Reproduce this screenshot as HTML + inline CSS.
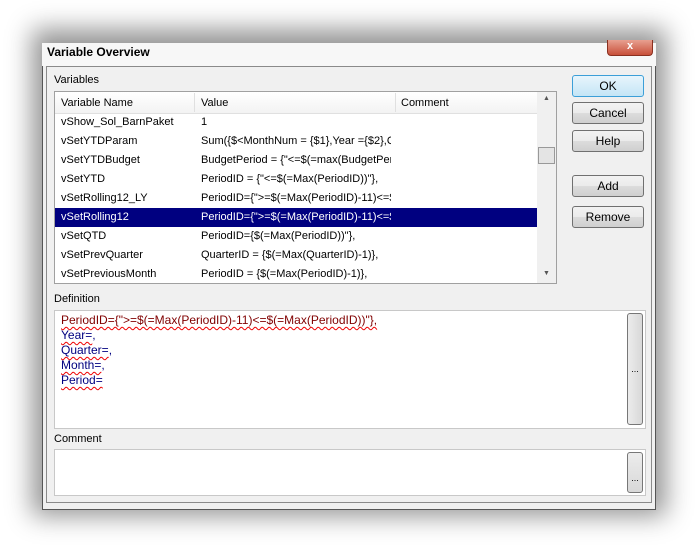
<!DOCTYPE html>
<html><head><style>
body{margin:0;width:699px;height:554px;background:#fff;position:relative;overflow:hidden;font-family:"Liberation Sans",sans-serif;font-size:11px;color:#000}
.a{position:absolute}
#win{left:42px;top:43px;width:614px;height:467px;background:#f0f0f0;border:1px solid #555;box-sizing:border-box;box-shadow:0 -4px 24px 10px rgba(0,0,0,.42)}
#title{left:42px;top:43px;width:614px;height:23px;background:#f7f7f7}
#client{left:46px;top:66px;width:606px;height:437px;background:#f0f0f0;border:1px solid #8a8a8a;box-sizing:border-box}
.box{background:#fff;border:1px solid #a0a0a0;box-sizing:border-box}
.btn{width:72px;height:22px;border:1px solid #707070;border-radius:3px;background:linear-gradient(#f2f2f2,#ebebeb 50%,#dcdcdc 51%,#cfcfcf);box-sizing:border-box;text-align:center;line-height:20px;font-size:12px}
.row{left:55px;width:482px;height:19px;line-height:19px;font-size:11px;overflow:hidden}
.row span{position:absolute;top:0}
.n{left:6px}.v{left:146px;width:190px;overflow:hidden;white-space:nowrap}
.def{font-size:12px;line-height:15px}
.sq{text-decoration:underline wavy #e00;text-decoration-thickness:1px;text-underline-offset:2px}
</style></head><body>
<div id="win" class="a"></div>
<div id="title" class="a"></div>
<div class="a" style="left:47px;top:45px;font-weight:bold;font-size:12px">Variable Overview</div>
<div class="a" style="left:607px;top:40px;width:44px;height:15px;background:linear-gradient(#e8a090,#c8503a);border:1px solid #8a3020;border-top:none;border-radius:0 0 4px 4px;color:#fff;text-align:center;font-weight:bold;font-size:11px;line-height:13px">x</div>
<div id="client" class="a"></div>
<div class="a" style="left:54px;top:74px">Variables</div>
<div class="a box" style="left:54px;top:91px;width:503px;height:193px"></div>
<div class="a" style="left:55px;top:92px;width:482px;height:21px;background:linear-gradient(#fff,#f3f3f3);border-bottom:1px solid #e0e0e0"></div>
<div class="a" style="left:194px;top:93px;width:1px;height:19px;background:#e0e0e0"></div>
<div class="a" style="left:395px;top:93px;width:1px;height:19px;background:#e0e0e0"></div>
<div class="a" style="left:61px;top:97px">Variable Name</div>
<div class="a" style="left:201px;top:97px">Value</div>
<div class="a" style="left:401px;top:97px">Comment</div>
<div class="a" style="left:537px;top:92px;width:19px;height:191px;background:#f0f0f0"></div>
<div class="a" style="left:543px;top:95px;font-size:7px;color:#555">▲</div>
<div class="a" style="left:543px;top:270px;font-size:7px;color:#555">▼</div>
<div class="a" style="left:538px;top:147px;width:15px;height:15px;border:1px solid #999;background:#e4e4e4"></div>
<div class="a row" style="top:113px"><span class="n">vShow_Sol_BarnPaket</span><span class="v">1</span></div>
<div class="a row" style="top:132px"><span class="n">vSetYTDParam</span><span class="v">Sum({$&lt;MonthNum = {$1},Year ={$2},Q</span></div>
<div class="a row" style="top:151px"><span class="n">vSetYTDBudget</span><span class="v">BudgetPeriod = {"&lt;=$(=max(BudgetPeriod</span></div>
<div class="a row" style="top:170px"><span class="n">vSetYTD</span><span class="v">PeriodID = {"&lt;=$(=Max(PeriodID))"},</span></div>
<div class="a row" style="top:189px"><span class="n">vSetRolling12_LY</span><span class="v">PeriodID={"&gt;=$(=Max(PeriodID)-11)&lt;=$(</span></div>
<div class="a row" style="top:208px;background:#000080;color:#fff"><span class="n">vSetRolling12</span><span class="v">PeriodID={"&gt;=$(=Max(PeriodID)-11)&lt;=$(</span></div>
<div class="a row" style="top:227px"><span class="n">vSetQTD</span><span class="v">PeriodID={$(=Max(PeriodID))"},</span></div>
<div class="a row" style="top:246px"><span class="n">vSetPrevQuarter</span><span class="v">QuarterID = {$(=Max(QuarterID)-1)},</span></div>
<div class="a row" style="top:265px;height:18px"><span class="n">vSetPreviousMonth</span><span class="v">PeriodID = {$(=Max(PeriodID)-1)},</span></div>
<div class="a" style="left:54px;top:293px">Definition</div>
<div class="a box" style="left:54px;top:310px;width:592px;height:119px;border-color:#c8c8c8"></div>
<div class="a def" style="left:61px;top:313px;color:#800000"><span class="sq">PeriodID={"&gt;=$(=Max(PeriodID)-11)&lt;=$(=Max(PeriodID))"},</span></div>
<div class="a def" style="left:61px;top:328px;color:#000080"><span class="sq">Year=</span>,<br><span class="sq">Quarter=</span>,<br><span class="sq">Month=</span>,<br><span class="sq">Period=</span></div>
<div class="a" style="left:627px;top:313px;width:16px;height:112px;border:1px solid #777;border-radius:3px;background:linear-gradient(90deg,#ececec,#d8d8d8);box-sizing:border-box;text-align:center;line-height:110px;font-size:9px">...</div>
<div class="a" style="left:54px;top:433px">Comment</div>
<div class="a box" style="left:54px;top:449px;width:592px;height:47px;border-color:#c8c8c8"></div>
<div class="a" style="left:627px;top:452px;width:16px;height:41px;border:1px solid #777;border-radius:3px;background:linear-gradient(#ececec,#d8d8d8);box-sizing:border-box;text-align:center;line-height:50px;font-size:9px">...</div>
<div class="a btn" style="left:572px;top:75px;border-color:#3c9fd8;background:linear-gradient(#e8f5fc,#c4e5f6)">OK</div>
<div class="a btn" style="left:572px;top:102px">Cancel</div>
<div class="a btn" style="left:572px;top:130px">Help</div>
<div class="a btn" style="left:572px;top:175px">Add</div>
<div class="a btn" style="left:572px;top:206px">Remove</div>
</body></html>
